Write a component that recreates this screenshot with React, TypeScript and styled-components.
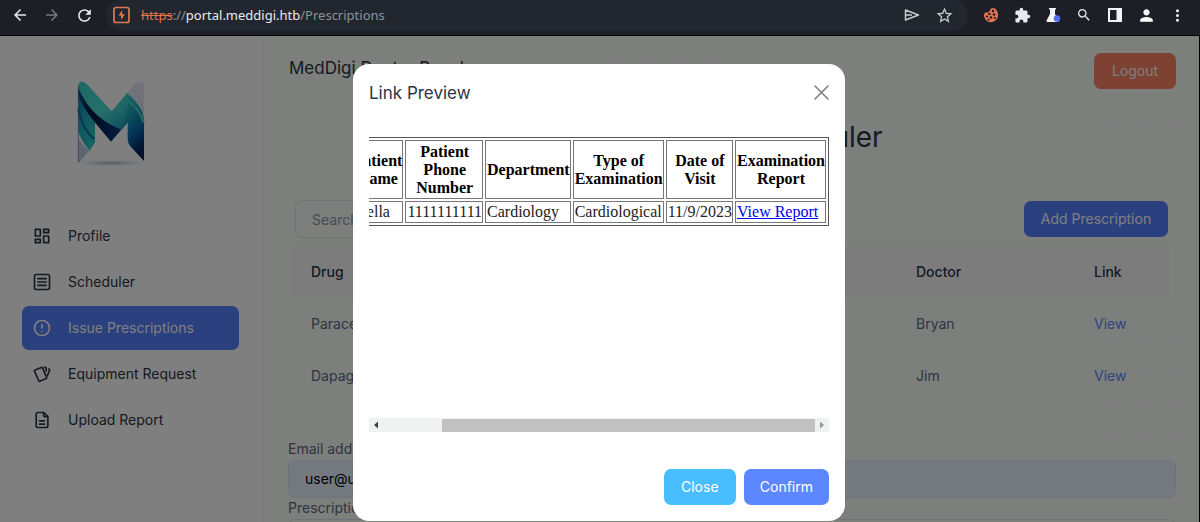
import React from 'react';
import styled, { createGlobalStyle } from 'styled-components';
import {
  MdArrowBack,
  MdArrowForward,
  MdRefresh,
  MdExtension,
  MdSearch,
  MdPerson,
  MdMoreVert,
  MdStarBorder,
} from 'react-icons/md';
import { TbAlertCircle } from 'react-icons/tb';

const GlobalStyle = createGlobalStyle`
  *, *::before, *::after { box-sizing: border-box; }
  body {
    margin: 0;
    background: #000;
    font-family: Inter, "Liberation Sans", sans-serif;
    font-size: 14px;
    color: #2a3547;
  }
  button, input { font: inherit; }
`;

const Window = styled.div`
  display: flex;
  flex-direction: column;
  height: 100vh;
  overflow: hidden;
`;

/* Browser toolbar */

const Toolbar = styled.header`
  display: flex;
  align-items: center;
  flex: none;
  height: 36px;
  padding: 0 13px 5px 10px;
  background: #1d1e26;
  border-bottom: 1px solid #050507;
`;

const ToolGroup = styled.div<{ $gap: number }>`
  display: flex;
  align-items: center;
  flex: none;
  gap: ${(p) => p.$gap}px;
`;

const ToolButton = styled.button<{ $color?: string }>`
  display: flex;
  align-items: center;
  justify-content: center;
  flex: none;
  width: 20px;
  height: 20px;
  padding: 0;
  border: 0;
  background: none;
  color: ${(p) => p.$color || '#e8eaed'};
`;

const AddressBar = styled.div`
  display: flex;
  align-items: center;
  flex: 1;
  min-width: 0;
  height: 31px;
  margin: 0 13px 0 12px;
  padding: 0 14px 0 7px;
  border-radius: 16px;
  background: #22272f;
`;

const Address = styled.span`
  flex: 1;
  margin-left: 10px;
  overflow: hidden;
  font-family: "Noto Sans", sans-serif;
  font-size: 13px;
  line-height: 20px;
  white-space: nowrap;
  color: #e8eaed;
`;

const Scheme = styled.s`
  color: #e0714a;
`;

const Faint = styled.span`
  color: #8f9297;
`;

/* Page */

const Page = styled.div`
  position: relative;
  display: flex;
  flex: 1;
  min-height: 0;
  margin-right: 1px;
  overflow: hidden;
  background: #fff;
`;

const Sidebar = styled.aside`
  display: flex;
  flex-direction: column;
  flex: none;
  width: 264px;
  padding: 43px 24px 0 22px;
  border-right: 1px solid #eef3f6;
`;

const Brand = styled.a`
  display: block;
  width: 94px;
  height: 92px;
  margin: 0 0 43px 41px;
`;

const Nav = styled.nav`
  display: flex;
  flex-direction: column;
  gap: 2px;
`;

const NavLink = styled.a<{ $active?: boolean }>`
  display: flex;
  align-items: center;
  gap: 16px;
  height: 44px;
  padding: 0 10px;
  border-radius: 7px;
  background: ${(p) => (p.$active ? '#5580ff' : 'transparent')};
  color: ${(p) => (p.$active ? '#fff' : '#2a3547')};
  line-height: 20px;
  text-decoration: none;
  white-space: nowrap;
`;

const Main = styled.main`
  flex: 1;
  min-width: 0;
  padding: 17px 23px 0 24px;
  background-color: #f8fff8;
  background-image:
    radial-gradient(circle at 3px 3px, #fefbff 2px, transparent 3px),
    radial-gradient(circle at 3px 3px, #fefbff 2px, transparent 3px),
    radial-gradient(circle at 3px 3px, #fefbff 2px, transparent 3px),
    radial-gradient(circle at 3px 3px, #fefbff 2px, transparent 3px);
  background-size: 63px 63px;
  background-position: 28px 20px, 60px 20px, 28px 51px, 60px 51px;
`;

const TopBar = styled.div`
  display: flex;
  justify-content: space-between;
  align-items: flex-start;
  height: 66px;
`;

const PanelName = styled.h2`
  margin: 4px 0 0;
  padding-left: 1px;
  font-size: 17px;
  font-weight: 400;
  line-height: 22px;
`;

const Button = styled.button<{ $bg: string; $min?: number }>`
  height: 36px;
  min-width: ${(p) => p.$min || 72}px;
  padding: 0 16px;
  border: 0;
  border-radius: 7px;
  background: ${(p) => p.$bg};
  color: #fff;
  font-size: 14px;
  line-height: 20px;
  white-space: nowrap;
`;

const Heading = styled.h1`
  margin: 0;
  font-size: 28px;
  font-weight: 400;
  line-height: 36px;
  text-align: center;
`;

const Actions = styled.div`
  display: flex;
  justify-content: space-between;
  align-items: center;
  margin-top: 45px;
  padding: 0 8px 0 7px;
`;

const SearchInput = styled.input`
  width: 240px;
  height: 38px;
  padding: 0 16px;
  border: 1px solid #dfe5ef;
  border-radius: 7px;
  background: transparent;
  &::placeholder { color: #8d98ab; opacity: 1; }
`;

const DrugTable = styled.table`
  width: calc(100% - 11px);
  margin: 7px 6px 0 5px;
  border-collapse: collapse;
  table-layout: fixed;
  color: #5a6a85;
  th, td {
    height: 52px;
    padding: 0 18px;
    text-align: left;
    font-weight: 400;
    line-height: 20px;
  }
  th {
    border-top: 1px solid #fbfbff;
    border-bottom: 1px solid #fbfbff;
    background: #fbf9fb;
    color: #2a3547;
    font-weight: 500;
  }
  a { color: #5d87ff; text-decoration: none; }
`;

const Col = styled.col<{ $w?: number }>`
  width: ${(p) => (p.$w ? `${p.$w}px` : 'auto')};
`;

const Form = styled.form`
  display: flex;
  flex-direction: column;
  margin-top: 37px;
`;

const Label = styled.label`
  height: 21px;
  line-height: 20px;
  color: #5a6a85;
`;

const Field = styled.input<{ $filled?: boolean }>`
  height: 38px;
  padding: 0 16px;
  border: 1px solid #dfe5ef;
  border-radius: 7px;
  background: ${(p) => (p.$filled ? '#e8f0fe' : 'transparent')};
  color: #000;
`;

/* Dialog */

const Backdrop = styled.div`
  position: absolute;
  inset: 0;
  display: flex;
  justify-content: center;
  align-items: flex-start;
  padding: 28px 1px 0 0;
  background: rgba(0, 0, 0, 0.5);
`;

const Dialog = styled.section`
  display: flex;
  flex-direction: column;
  width: 492px;
  max-width: 100%;
  padding: 16px;
  border-radius: 16px;
  background: #fff;
`;

const DialogHead = styled.div`
  display: flex;
  justify-content: space-between;
  align-items: center;
  height: 25px;
`;

const DialogTitle = styled.h3`
  margin: 0;
  font-size: 17px;
  font-weight: 400;
  line-height: 26px;
`;

const CloseButton = styled.button`
  display: flex;
  padding: 0;
  border: 0;
  background: none;
  color: #808080;
`;

const Frame = styled.div`
  display: flex;
  flex-direction: column;
  justify-content: space-between;
  height: 295px;
  margin-top: 32px;
`;

const Viewport = styled.div`
  display: flex;
  justify-content: flex-end;
  overflow: hidden;
`;

const ReportTable = styled.table`
  flex: none;
  border: 1px solid #555;
  border-collapse: separate;
  border-spacing: 2px;
  font-family: "Liberation Serif", serif;
  font-size: 16px;
  line-height: 18px;
  color: #000;
  th, td {
    padding: 1px 0 1px 1px;
    border: 1px solid #777;
    white-space: nowrap;
  }
  th { padding-top: 2px; }
  td { text-align: left; color: #222; }
  a { color: #0000ee; }
`;

const ScrollTrack = styled.div`
  display: flex;
  align-items: center;
  height: 14px;
  padding: 0 4px;
  background: #f0f2f1;
`;

const ScrollThumb = styled.div`
  flex: 1;
  height: 13px;
  margin: 0 4px 0 63px;
  background: #c1c1c1;
`;

const DialogFoot = styled.div`
  display: flex;
  justify-content: flex-end;
  gap: 8px;
  margin-top: 37px;
`;

const Logo = () => (
  <svg width="94" height="92" viewBox="190 60 282 276" aria-hidden="true">
    <defs>
      <linearGradient id="ribbon" x1="0" y1="0" x2="1" y2="1">
        <stop offset="0" stopColor="#3fd0c8" />
        <stop offset="0.5" stopColor="#4be0d8" />
        <stop offset="1" stopColor="#0f86b4" />
      </linearGradient>
      <linearGradient id="right" x1="0" y1="0" x2="0.3" y2="1">
        <stop offset="0" stopColor="#3fdcd0" />
        <stop offset="0.4" stopColor="#1aa0b4" />
        <stop offset="0.7" stopColor="#0a66ac" />
        <stop offset="1" stopColor="#06225c" />
      </linearGradient>
      <linearGradient id="left" x1="0" y1="0" x2="0.5" y2="1">
        <stop offset="0" stopColor="#0a6ca8" />
        <stop offset="0.5" stopColor="#1ea6b8" />
        <stop offset="1" stopColor="#2cc6c4" />
      </linearGradient>
      <linearGradient id="navy" x1="0" y1="0" x2="1" y2="0.6">
        <stop offset="0" stopColor="#0a5a94" />
        <stop offset="0.4" stopColor="#04163e" />
        <stop offset="1" stopColor="#083a78" />
      </linearGradient>
      <radialGradient id="ground">
        <stop offset="0" stopColor="#9fb0c4" />
        <stop offset="1" stopColor="#fff" stopOpacity="0" />
      </radialGradient>
    </defs>
    <ellipse cx="335" cy="312" rx="136" ry="12" fill="url(#ground)" />
    <path d="M382 102L406 74Q420 64 433 72V180Q420 140 382 102Z" fill="#e2e7f3" />
    <path d="M402 90Q426 122 432 165" fill="none" stroke="#c9d2e8" strokeWidth="3" />
    <path d="M236 80L286 180V250L270 275Q240 240 236 215Z" fill="url(#left)" />
    <path d="M236 150Q250 215 284 240" fill="none" stroke="#0b77a4" strokeWidth="7" />
    <path d="M236 236Q250 262 270 274L240 308H236Z" fill="#bcc8e4" />
    <path d="M236 82Q270 130 320 160L384 190L334 248L284 188Q246 140 236 108Z" fill="url(#navy)" />
    <path d="M236 76Q244 58 264 78L336 157L382 102Q404 122 418 146L384 190L366 212Q330 200 296 172Q258 138 236 86Z" fill="url(#ribbon)" />
    <path d="M382 102Q428 140 433 180V306L392 262Q384 252 384 240V188L366 208Q392 160 382 102Z" fill="url(#right)" />
    <path d="M384 124Q420 150 432 190" fill="none" stroke="#45d5cc" strokeWidth="7" />
    <path d="M236 80V308L242 304" fill="none" stroke="#4b6eb0" strokeWidth="2" />
  </svg>
);

const LineIcon = ({ children }: { children: React.ReactNode }) => (
  <svg width="20" height="20" viewBox="0 0 24 24" fill="none" stroke="currentColor" strokeWidth="2" strokeLinecap="round" strokeLinejoin="round" aria-hidden="true">
    {children}
  </svg>
);

const DashboardIcon = () => (
  <LineIcon>
    <path d="M4 4h6v8H4zM4 16h6v4H4zM14 12h6v8h-6zM14 4h6v4h-6z" />
  </LineIcon>
);

const ArticleIcon = () => (
  <LineIcon>
    <rect x="3" y="3" width="18" height="18" rx="2" />
    <path d="M7 8h10M7 12h10M7 16h10" />
  </LineIcon>
);

const CardsIcon = () => (
  <LineIcon>
    <path d="M3.600 7.200l7.700-3.100a1 1 0 0 1 1.300.500l5 11.600a1 1 0 0 1-.500 1.300l-7.700 3.200a1 1 0 0 1-1.300-.600L3 8.500a1 1 0 0 1 .600-1.300z" />
    <path d="M15 4h1a1 1 0 0 1 1 1v3.500M20 6c.300.100.400.200.600.300a1 1 0 0 1 .500 1.300L18.500 14" />
  </LineIcon>
);

const FileIcon = () => (
  <LineIcon>
    <path d="M14 3v4a1 1 0 0 0 1 1h4" />
    <path d="M17 21H7a2 2 0 0 1-2-2V5a2 2 0 0 1 2-2h7l5 5v11a2 2 0 0 1-2 2zM9 17h6M9 13h6" />
  </LineIcon>
);

const BoltSquareIcon = () => (
  <svg width="18" height="18" viewBox="0 0 18 18" aria-hidden="true">
    <rect x="1" y="1.500" width="15" height="15" rx="2" fill="none" stroke="#e0784f" strokeWidth="1.700" />
    <path d="M9.200 4L5.500 9.500H8V14l3.800-5.700H9.200z" fill="#e0784f" />
  </svg>
);

const SendIcon = () => (
  <svg width="16" height="14" viewBox="0 0 16 14" fill="none" stroke="#c8cacd" strokeWidth="1.500" strokeLinejoin="round" aria-hidden="true">
    <path d="M1.500 2L14.500 7L1.500 12V7z M1.500 7H8" />
  </svg>
);

const CookieIcon = () => (
  <svg width="16" height="16" viewBox="0 0 16 16" aria-hidden="true">
    <path d="M8 1.500Q10 .500 12 1.500Q15 4 15 8A7 7 0 0 1 1 8.500Q1 7 2 5.500L5 5.500L6.500 4z" fill="#dd7650" />
    <g fill="#1d1e26">
      <circle cx="10" cy="4" r="1.200" />
      <circle cx="6.500" cy="7" r="1.200" />
      <circle cx="11" cy="7.500" r="1.300" />
      <circle cx="4" cy="9.500" r="1.100" />
      <circle cx="8" cy="10.500" r="1.300" />
      <circle cx="12" cy="11" r="1.100" />
      <circle cx="5.500" cy="12.800" r="1" />
    </g>
  </svg>
);

const FlaskIcon = () => (
  <svg width="16" height="16" viewBox="0 0 16 16" aria-hidden="true">
    <path d="M4 1h7v1.500h-1V7l3.500 6.500Q14 15 12.500 15h-10Q1 15 1.500 13.500L5 7V2.500H4z" fill="#f1f3f4" />
    <circle cx="12" cy="11.500" r="3.200" fill="#4f6df0" />
  </svg>
);

const SidePanelIcon = () => (
  <svg width="16" height="16" viewBox="0 0 16 16" aria-hidden="true">
    <path fillRule="evenodd" d="M1 1h14v14H1zM3 3v10h6.500V3z" fill="#f1f3f4" />
  </svg>
);

const ArrowIcon = ({ left }: { left?: boolean }) => (
  <svg width="6" height="8" viewBox="0 0 6 8" aria-hidden="true">
    <path d={left ? 'M5 0.500V7.500L1 4z' : 'M1 0.500V7.500L5 4z'} fill={left ? '#404040' : '#989898'} />
  </svg>
);

const navItems = [
  { label: 'Profile', icon: <DashboardIcon /> },
  { label: 'Scheduler', icon: <ArticleIcon /> },
  { label: 'Issue Prescriptions', icon: <TbAlertCircle size={20} />, active: true },
  { label: 'Equipment Request', icon: <CardsIcon /> },
  { label: 'Upload Report', icon: <FileIcon /> },
];

const prescriptions = [
  { drug: 'Paracetamol', doctor: 'Bryan' },
  { drug: 'Dapagliflozin', doctor: 'Jim' },
];

export default function App() {
  return (
    <Window>
      <GlobalStyle />
      <Toolbar>
        <ToolGroup $gap={12}>
          <ToolButton aria-label="Back"><MdArrowBack size={18} /></ToolButton>
          <ToolButton aria-label="Forward" $color="#77797d"><MdArrowForward size={18} /></ToolButton>
          <ToolButton aria-label="Reload"><MdRefresh size={19} /></ToolButton>
        </ToolGroup>
        <AddressBar>
          <BoltSquareIcon />
          <Address>
            <Scheme>https</Scheme><Faint>://</Faint>portal.meddigi.htb<Faint>/Prescriptions</Faint>
          </Address>
          <ToolGroup $gap={12}>
            <ToolButton aria-label="Share"><SendIcon /></ToolButton>
            <ToolButton aria-label="Bookmark" $color="#c8cacd"><MdStarBorder size={19} /></ToolButton>
          </ToolGroup>
        </AddressBar>
        <ToolGroup $gap={11}>
          <ToolButton aria-label="Cookies"><CookieIcon /></ToolButton>
          <ToolButton aria-label="Extensions"><MdExtension size={17} /></ToolButton>
          <ToolButton aria-label="Labs"><FlaskIcon /></ToolButton>
          <ToolButton aria-label="Search"><MdSearch size={16} /></ToolButton>
          <ToolButton aria-label="Side panel"><SidePanelIcon /></ToolButton>
          <ToolButton aria-label="Account" $color="#fff"><MdPerson size={19} /></ToolButton>
          <ToolButton aria-label="Menu"><MdMoreVert size={19} /></ToolButton>
        </ToolGroup>
      </Toolbar>

      <Page>
        <Sidebar>
          <Brand href="#" aria-label="MedDigi"><Logo /></Brand>
          <Nav>
            {navItems.map((item) => (
              <NavLink key={item.label} href="#" $active={item.active}>
                {item.icon}
                {item.label}
              </NavLink>
            ))}
          </Nav>
        </Sidebar>

        <Main>
          <TopBar>
            <PanelName>MedDigi Doctor Panel</PanelName>
            <Button $bg="#fa8465" $min={82}>Logout</Button>
          </TopBar>
          <Heading>Prescription Scheduler</Heading>
          <Actions>
            <SearchInput aria-label="Search" placeholder="Search" />
            <Button $bg="#5580ff" $min={144}>Add Prescription</Button>
          </Actions>
          <DrugTable>
            <colgroup>
              <Col />
              <Col $w={178} />
              <Col $w={94} />
            </colgroup>
            <thead>
              <tr><th>Drug</th><th>Doctor</th><th>Link</th></tr>
            </thead>
            <tbody>
              {prescriptions.map((p) => (
                <tr key={p.drug}>
                  <td>{p.drug}</td>
                  <td>{p.doctor}</td>
                  <td><a href="#">View</a></td>
                </tr>
              ))}
            </tbody>
          </DrugTable>
          <Form>
            <Label htmlFor="email">Email address</Label>
            <Field id="email" $filled defaultValue="user@user.com" />
            <Label htmlFor="link">Prescription Link</Label>
            <Field id="link" />
          </Form>
        </Main>

        <Backdrop>
          <Dialog role="dialog" aria-labelledby="preview-title">
            <DialogHead>
              <DialogTitle id="preview-title">Link Preview</DialogTitle>
              <CloseButton aria-label="Close preview">
                <svg width="15" height="15" viewBox="0 0 15 15" stroke="currentColor" strokeWidth="1.600" strokeLinecap="round" aria-hidden="true">
                  <path d="M1 1L14 14M14 1L1 14" />
                </svg>
              </CloseButton>
            </DialogHead>
            <Frame>
              <Viewport>
                <ReportTable>
                  <thead>
                    <tr>
                      <th>Patient<br />Name</th>
                      <th>Patient<br />Phone<br />Number</th>
                      <th>Department</th>
                      <th>Type of<br />Examination</th>
                      <th>Date of<br />Visit</th>
                      <th>Examination<br />Report</th>
                    </tr>
                  </thead>
                  <tbody>
                    <tr>
                      <td>Stella</td>
                      <td>1111111111</td>
                      <td>Cardiology</td>
                      <td>Cardiological</td>
                      <td>11/9/2023</td>
                      <td><a href="#">View Report</a></td>
                    </tr>
                  </tbody>
                </ReportTable>
              </Viewport>
              <ScrollTrack>
                <ArrowIcon left />
                <ScrollThumb />
                <ArrowIcon />
              </ScrollTrack>
            </Frame>
            <DialogFoot>
              <Button $bg="#49beff">Close</Button>
              <Button $bg="#5d87ff">Confirm</Button>
            </DialogFoot>
          </Dialog>
        </Backdrop>
      </Page>
    </Window>
  );
}
